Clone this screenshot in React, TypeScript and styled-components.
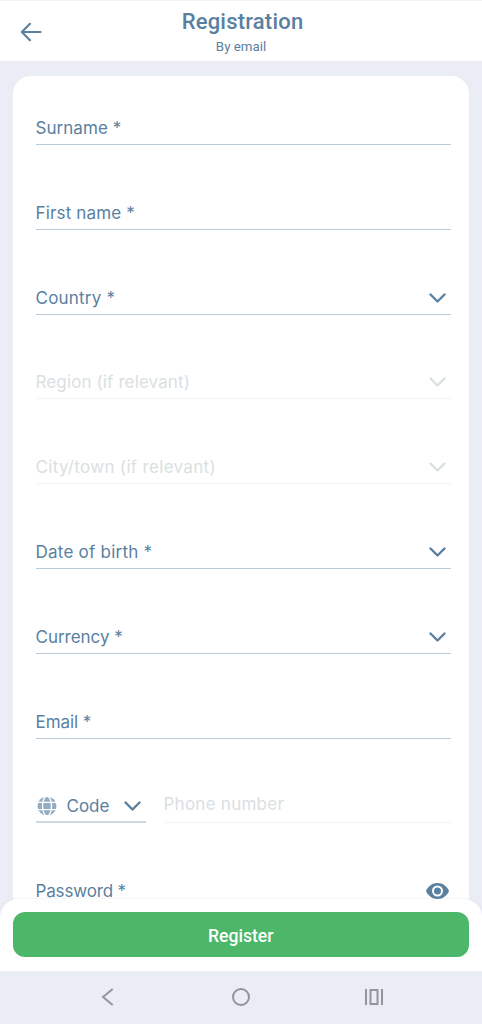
import React from 'react';
import styled, { createGlobalStyle } from 'styled-components';

const INK = '#5a809f';
const MUTED = '#dae0e2';

const GlobalStyle = createGlobalStyle`
  * { box-sizing: border-box; }
  body { margin: 0; background: #eaedf5; }
  button { font: inherit; border: 0; padding: 0; background: none; }
`;

const Screen = styled.div`
  display: flex;
  flex-direction: column;
  width: 100%;
  height: 1024px;
  overflow: hidden;
  background: #eaedf5;
  color: ${INK};
  font-family: Inter, sans-serif;
`;

const Header = styled.header`
  display: grid;
  grid-template-columns: 62px 1fr 62px;
  flex: none;
  height: 61px;
  border-top: 1px solid #f3f3f4;
  background: #fff;
  box-shadow: 0 1px 1px #eeeef3;
`;

const BackButton = styled.button`
  display: flex;
  align-items: center;
  justify-content: center;
  padding-top: 1px;
  color: ${INK};
`;

const Heading = styled.div`
  padding-top: 7px;
  text-align: center;
  font-family: Roboto, sans-serif;
`;

const Title = styled.h1`
  margin: 0 0 0 3px;
  font-size: 22px;
  line-height: 27px;
  font-weight: 500;
  letter-spacing: 0.2px;
`;

const Subtitle = styled.p`
  margin: 2px 0 0;
  font-size: 13.3px;
  line-height: 20px;
`;

const Content = styled.main`
  flex: 1;
  min-height: 0;
  overflow: hidden;
  padding: 15px 13.5px 0 13px;
`;

const Card = styled.form`
  display: flex;
  flex-direction: column;
  gap: 46.8px;
  height: 900px;
  padding: 31px 18px 0 22.5px;
  border-radius: 18px 18px 0 0;
  background: #fff;
`;

const Field = styled.div<{ $muted?: boolean; $width?: string }>`
  display: flex;
  align-items: center;
  flex: none;
  width: ${p => p.$width ?? '100%'};
  height: 38px;
  padding: 5px 1px 0 0;
  border-bottom: 1px solid ${p => (p.$muted ? '#f1f3f5' : '#b9cbd8')};
  color: ${p => (p.$muted ? MUTED : INK)};
`;

const Label = styled.span<{ $spacing?: number }>`
  font-size: 17px;
  line-height: 24px;
  white-space: pre;
  letter-spacing: ${p => p.$spacing ?? 0}px;
`;

const Trailing = styled.span`
  display: flex;
  margin-left: auto;
  margin-right: 3px;
`;

const EyeSlot = styled(Trailing)`
  margin-right: 1px;
`;

const PhoneRow = styled.div`
  display: flex;
  gap: 18px;
`;

const CodeField = styled(Field)`
  flex: none;
  padding-left: 1px;
  border-bottom: 2px solid #ced9e4;
`;

const CodeLabel = styled(Label)`
  margin-left: 10px;
`;

const NumberField = styled(Field)`
  flex: 1;
  padding-bottom: 5px;
`;

const Footer = styled.footer`
  position: relative;
  flex: none;
  height: 72px;
  margin-top: -14px;
  padding: 13px 13.5px 0 13px;
  border-radius: 18px 18px 0 0;
  background: #fff;
  box-shadow: 0 -1px 2px rgba(70, 80, 120, 0.06);
`;

const RegisterButton = styled.button`
  display: block;
  width: 100%;
  height: 45px;
  padding-top: 3px;
  border-radius: 12px;
  background: #4cb768;
  color: #fff;
  font: 500 17.6px/42px Roboto, sans-serif;
`;

const SystemBar = styled.nav`
  display: grid;
  grid-template-columns: repeat(3, 133px);
  justify-content: center;
  align-items: center;
  justify-items: center;
  flex: none;
  height: 53px;
  padding-bottom: 1px;
  color: #929599;
`;

const Chevron = () => (
  <svg width="18" height="12" viewBox="0 0 18 12" fill="none" stroke="currentColor" strokeWidth="2.4" strokeLinecap="round" strokeLinejoin="round">
    <path d="M1.500 2.500 8.500 9.500 15.500 2.500" />
  </svg>
);

const Globe = () => (
  <svg width="20" height="20" viewBox="0 0 20 20" fill="none">
    <circle cx="10" cy="10" r="9.5" fill="#94acc0" />
    <g stroke="#fff" strokeWidth="1.4">
      <path d="M0 6.4h20M0 13.6h20" />
      <ellipse cx="10" cy="10" rx="4.5" ry="10" />
    </g>
  </svg>
);

const Eye = () => (
  <svg width="23" height="16" viewBox="0 0 23 16">
    <path d="M11.5 0C6.3 0 1.9 3.3 0 8c1.9 4.700 6.300 8 11.500 8S21.100 12.700 23 8C21.100 3.300 16.700 0 11.500 0Z" fill={INK} />
    <circle cx="11.500" cy="8" r="4.500" fill="none" stroke="#fff" strokeWidth="2" />
  </svg>
);

type FieldData = { label: string; spacing: number; select?: boolean; muted?: boolean };

const fields: FieldData[] = [
  { label: 'Surname *', spacing: 0.05 },
  { label: 'First name *', spacing: 0.16 },
  { label: 'Country *', spacing: 0.22, select: true },
  { label: 'Region (if relevant)', spacing: 0.12, select: true, muted: true },
  { label: 'City/town (if relevant)', spacing: 0.32, select: true, muted: true },
  { label: 'Date of birth *', spacing: 0.24, select: true },
  { label: 'Currency *', spacing: -0.03, select: true },
  { label: 'Email *', spacing: -0.06 },
];

export default function App() {
  return (
    <>
      <GlobalStyle />
      <Screen>
        <Header>
          <BackButton type="button" aria-label="Back">
            <svg width="22" height="20" viewBox="0 0 22 20" fill="none" stroke="currentColor" strokeWidth="2.2" strokeLinecap="round" strokeLinejoin="round">
              <path d="M20.500 10H2M10 1.800 1.800 10 10 18.200" />
            </svg>
          </BackButton>
          <Heading>
            <Title>Registration</Title>
            <Subtitle>By email</Subtitle>
          </Heading>
        </Header>
        <Content>
          <Card>
            {fields.map(field => (
              <Field key={field.label} $muted={field.muted}>
                <Label $spacing={field.spacing}>{field.label}</Label>
                {field.select && <Trailing><Chevron /></Trailing>}
              </Field>
            ))}
            <PhoneRow>
              <CodeField $width="110px">
                <Globe />
                <CodeLabel>Code</CodeLabel>
                <Trailing><Chevron /></Trailing>
              </CodeField>
              <NumberField $muted>
                <Label $spacing={0.25}>Phone number</Label>
              </NumberField>
            </PhoneRow>
            <Field>
              <Label $spacing={-0.15}>Password *</Label>
              <EyeSlot><Eye /></EyeSlot>
            </Field>
          </Card>
        </Content>
        <Footer>
          <RegisterButton type="button">Register</RegisterButton>
        </Footer>
        <SystemBar>
          <svg width="14" height="20" viewBox="0 0 14 20" fill="none" stroke="currentColor" strokeWidth="2">
            <path d="M11.700 2 2 10l9.700 8" />
          </svg>
          <svg width="20" height="20" viewBox="0 0 20 20" fill="none" stroke="currentColor" strokeWidth="2">
            <circle cx="10" cy="10" r="8" />
          </svg>
          <svg width="20" height="18" viewBox="0 0 20 18" fill="none" stroke="currentColor" strokeWidth="2">
            <path d="M2 1v16M18 1v16M6.500 2h7v14h-7z" />
          </svg>
        </SystemBar>
      </Screen>
    </>
  );
}
